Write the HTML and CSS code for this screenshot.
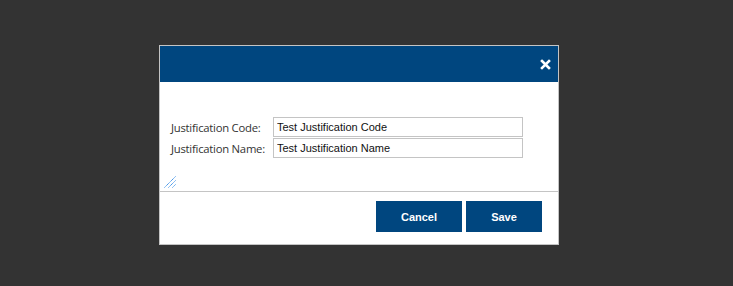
FILE: index.html
```html
<!DOCTYPE html>
<html lang="en">
<head>
  <meta charset="UTF-8">
  <title>Justification</title>
  <link rel="stylesheet" href="styles.css">
</head>
<body>

<div class="dialog">
  <div class="dialog-titlebar">
    <button class="dialog-close" title="Close">
      <svg width="11" height="11" viewBox="0 0 11 11">
        <path d="M2 2 L9 9 M9 2 L2 9" stroke="#fff" stroke-width="2.6" stroke-linecap="square"/>
      </svg>
    </button>
  </div>

  <div class="dialog-content">
    <div class="form-row">
      <label>Justification Code:</label>
      <input type="text" value="Test Justification Code">
    </div>
    <div class="form-row">
      <label>Justification Name:</label>
      <input type="text" value="Test Justification Name">
    </div>
    <svg class="resize-grip" width="12" height="12" viewBox="0 0 12 12">
      <path d="M0.5 11.5 L11.5 0.5 M4.5 11.5 L11.5 4.5 M8.5 11.5 L11.5 8.5" stroke="#2a86e6" stroke-width="1" stroke-dasharray="1.2 0.6"/>
    </svg>
  </div>

  <div class="dialog-buttons">
    <button class="btn btn-cancel">Cancel</button>
    <button class="btn btn-save">Save</button>
  </div>
</div>

</body>
</html>
```

FILE: styles.css
```css
body {
  margin: 0;
  background-color: #333333;
  font-family: "Open Sans", Arial, sans-serif;
}

.dialog {
  width: 398px;
  margin: 45px 0 0 159px;
  background-color: #fff;
  border: 1px solid #c4c4c4;
}

.dialog-titlebar {
  height: 36px;
  background-color: #00467f;
  display: flex;
  justify-content: flex-end;
  align-items: center;
  padding-right: 7px;
}

.dialog-close {
  background: transparent;
  border: none;
  padding: 0;
  width: 11px;
  height: 11px;
  display: flex;
  cursor: pointer;
}

.dialog-content {
  position: relative;
  height: 110px;
  padding: 35px 0 0 11px;
  box-sizing: border-box;
  border-bottom: 1px solid #c4c4c4;
}

.form-row {
  display: flex;
  align-items: center;
  margin-bottom: 1px;
}

.form-row label {
  width: 102px;
  font-size: 11.3px;
  color: #333;
  letter-spacing: -0.25px;
}

.form-row input {
  width: 250px;
  height: 20px;
  box-sizing: border-box;
  border: 1px solid #c4c4c4;
  padding: 0 3px;
  font-family: Arial, "Liberation Sans", sans-serif;
  font-size: 11px;
  color: #111;
  outline: none;
}

.resize-grip {
  position: absolute;
  left: 4px;
  bottom: 3px;
}

.dialog-buttons {
  display: flex;
  justify-content: flex-end;
  gap: 4px;
  padding: 9px 16px 12px 0;
}

.btn {
  height: 31px;
  background-color: #00467f;
  color: #fff;
  border: none;
  font-family: Arial, "Liberation Sans", sans-serif;
  font-weight: bold;
  font-size: 11px;
  cursor: pointer;
}

.btn-cancel {
  width: 86px;
}

.btn-save {
  width: 76px;
}
```
